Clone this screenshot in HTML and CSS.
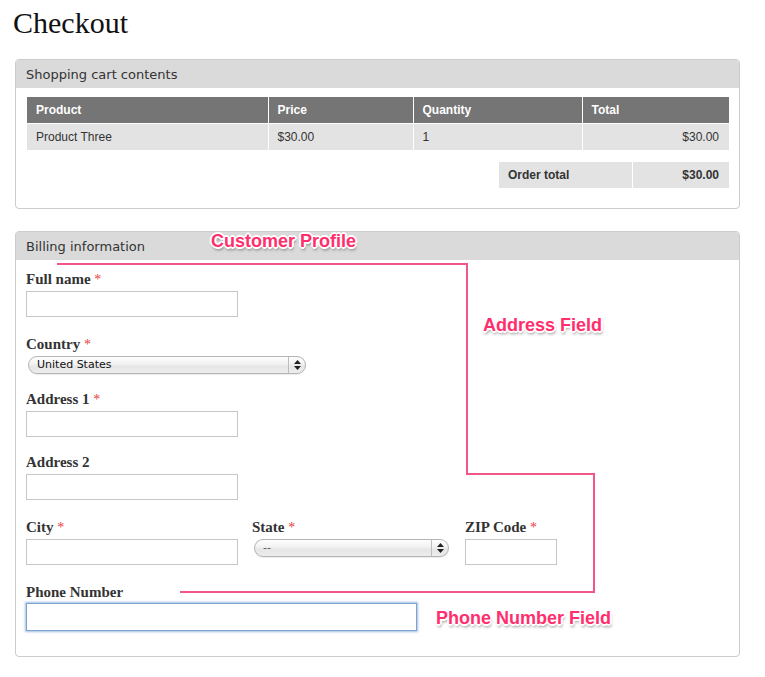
FILE: index.html
```html
<!DOCTYPE html>
<html lang="en">
<head>
<meta charset="utf-8">
<title>Checkout</title>
<link rel="stylesheet" href="styles.css">
</head>
<body>
<div class="page">
  <h1 class="title">Checkout</h1>

  <section class="pane cart">
    <div class="pane-title">Shopping cart contents</div>
    <div class="pane-body cart-body">
      <table class="cart-table">
        <colgroup>
          <col class="c1"><col class="c2"><col class="c3"><col class="c4">
        </colgroup>
        <thead>
          <tr><th>Product</th><th>Price</th><th>Quantity</th><th>Total</th></tr>
        </thead>
        <tbody>
          <tr><td>Product Three</td><td>$30.00</td><td>1</td><td class="num">$30.00</td></tr>
        </tbody>
      </table>
      <table class="order-total">
        <tr><td class="ot-label">Order total</td><td class="ot-value">$30.00</td></tr>
      </table>
    </div>
  </section>

  <section class="pane billing">
    <div class="pane-title">Billing information</div>
    <div class="pane-body form-body">
      <div class="field f-name">
        <label class="lbl">Full name <span class="req">*</span></label>
        <input class="txt w-std" type="text">
      </div>
      <div class="field f-country">
        <label class="lbl">Country <span class="req">*</span></label>
        <div class="select select-country">
          <span class="select-value">United States</span>
          <span class="select-arrows"><svg width="7" height="10" viewBox="0 0 7 10"><polygon points="0,4 3.5,0 7,4" fill="#222"/><polygon points="0,6 3.5,10 7,6" fill="#222"/></svg></span>
        </div>
      </div>
      <div class="field f-addr1">
        <label class="lbl">Address 1 <span class="req">*</span></label>
        <input class="txt w-std" type="text">
      </div>
      <div class="field f-addr2">
        <label class="lbl">Address 2</label>
        <input class="txt w-std" type="text">
      </div>
      <div class="field row3">
        <div class="col">
          <label class="lbl">City <span class="req">*</span></label>
          <input class="txt w-std" type="text">
        </div>
        <div class="col">
          <label class="lbl">State <span class="req">*</span></label>
          <div class="select select-state">
            <span class="select-value">--</span>
            <span class="select-arrows"><svg width="7" height="10" viewBox="0 0 7 10"><polygon points="0,4 3.5,0 7,4" fill="#222"/><polygon points="0,6 3.5,10 7,6" fill="#222"/></svg></span>
          </div>
        </div>
        <div class="col">
          <label class="lbl">ZIP Code <span class="req">*</span></label>
          <input class="txt w-zip" type="text">
        </div>
      </div>
      <div class="field last">
        <label class="lbl lbl-phone">Phone Number</label>
        <input class="txt w-phone focus" type="text">
      </div>
    </div>
  </section>

  <svg class="annot-lines" width="765" height="677" viewBox="0 0 765 677">
    <polyline points="57,264 467,264 467,474 594,474 594,592 180,592" fill="none" stroke="#f25686" stroke-width="2"/>
  </svg>
  <span class="annot annot-profile">Customer Profile</span>
  <span class="annot annot-address">Address Field</span>
  <span class="annot annot-phone">Phone Number Field</span>
</div>
</body>
</html>
```

FILE: styles.css
```css
html, body {
  margin: 0;
  padding: 0;
  background: #fff;
}

.page {
  position: relative;
  width: 765px;
  min-height: 677px;
  padding: 5px 25px 0 15px;
  box-sizing: border-box;
  font-family: "Liberation Sans", Arial, sans-serif;
  color: #333;
}

.title {
  margin: 0 0 18px -2px;
  font-family: "Liberation Serif", "Times New Roman", serif;
  font-weight: normal;
  font-size: 30px;
  line-height: 36px;
  color: #111;
}

.pane {
  border: 1px solid #cccccc;
  border-radius: 4px;
  overflow: hidden;
}

.billing {
  margin-top: 22px;
}

.pane-title {
  height: 28px;
  line-height: 29px;
  background: #dadada;
  padding-left: 10px;
  font-family: "DejaVu Sans", "Lucida Grande", sans-serif;
  font-size: 13px;
  color: #333;
}

.cart-body {
  padding: 9px 10px 20px 11px;
  display: flex;
  flex-direction: column;
  align-items: flex-end;
}

.cart-table {
  width: 702px;
  border-collapse: collapse;
  table-layout: fixed;
  font-size: 12px;
}

.cart-table .c1 { width: 241px; }
.cart-table .c2 { width: 145px; }
.cart-table .c3 { width: 169px; }
.cart-table .c4 { width: 147px; }

.cart-table th {
  background: #757575;
  color: #fff;
  font-weight: bold;
  text-align: left;
  height: 26px;
  padding: 0 9px;
  border-left: 1px solid #fff;
}

.cart-table td {
  background: #e3e3e3;
  height: 26px;
  padding: 0 9px;
  border-left: 1px solid #fff;
  border-top: 1px solid #fff;
  color: #333;
}

.cart-table th:first-child,
.cart-table td:first-child {
  border-left: none;
}

.cart-table td.num {
  text-align: right;
  padding-right: 10px;
}

.order-total {
  margin-top: 12px;
  border-collapse: collapse;
  font-size: 12px;
  font-weight: bold;
}

.order-total td {
  background: #e3e3e3;
  height: 26px;
  color: #333;
}

.ot-label {
  width: 124px;
  padding: 0 0 0 9px;
  border-right: 1px solid #fff;
}

.ot-value {
  width: 86px;
  padding: 0 10px 0 0;
  text-align: right;
}

.form-body {
  padding: 11px 10px 25px 10px;
}

.field { margin-bottom: 19px; }
.field.f-name { margin-bottom: 19px; }
.field.f-country { margin-bottom: 17px; }
.field.f-addr1 { margin-bottom: 17px; }
.field.f-addr2 { margin-bottom: 19px; }
.field.row3 { margin-bottom: 19px; }
.field.last { margin-bottom: 0; }

.lbl {
  display: block;
  height: 16px;
  margin-bottom: 4px;
  font-family: "Liberation Serif", Georgia, serif;
  font-weight: bold;
  font-size: 15px;
  line-height: 16px;
  color: #333;
}

.lbl-phone {
  margin-bottom: 3px;
}

.req {
  color: #e8413f;
  font-weight: normal;
  font-size: 14px;
  line-height: 0;
}

.txt {
  display: block;
  box-sizing: border-box;
  height: 26px;
  margin: 0;
  border: 1px solid #c6c6c6;
  background: #fff;
  padding: 2px 4px;
  font-size: 12px;
  outline: none;
}

.w-std { width: 212px; }
.w-zip { width: 92px; }
.w-phone {
  width: 391px;
  height: 28px;
}

.txt.focus {
  border: 1px solid #7fa3cf;
  box-shadow: 0 0 2px 1px rgba(110, 155, 210, 0.65);
}

.select {
  display: flex;
  align-items: stretch;
  box-sizing: border-box;
  height: 18px;
  margin-left: 2px;
  border: 1px solid #b5b5b5;
  border-radius: 9px;
  background: linear-gradient(to bottom, #fdfdfd 0%, #f3f3f3 40%, #e6e6e6 60%, #ededed 100%);
  box-shadow: 0 1px 1px rgba(0, 0, 0, 0.08);
  font-family: "DejaVu Sans", "Lucida Grande", sans-serif;
  font-size: 11px;
  color: #111;
}

.select-country { width: 278px; }
.select-state { width: 195px; }

.select-value {
  flex: 1;
  line-height: 16px;
  padding-left: 8px;
}

.select-state .select-value {
  color: #555;
}

.select-arrows {
  width: 16px;
  border-left: 1px solid #bdbdbd;
  display: flex;
  align-items: center;
  justify-content: center;
}

.row3 {
  display: grid;
  grid-template-columns: 226px 213px auto;
}

.annot-lines {
  position: absolute;
  left: 0;
  top: 0;
  pointer-events: none;
}

.annot {
  position: absolute;
  font-family: "Liberation Sans", Arial, sans-serif;
  font-weight: bold;
  font-size: 18px;
  line-height: 18px;
  color: #ff2f6e;
  white-space: nowrap;
  text-shadow:
    1px 0 0 #fff, -1px 0 0 #fff, 0 1px 0 #fff, 0 -1px 0 #fff,
    1px 1px 0 #fff, -1px -1px 0 #fff, 1px -1px 0 #fff, -1px 1px 0 #fff,
    2px 0 0 #fff, -2px 0 0 #fff, 0 2px 0 #fff, 0 -2px 0 #fff,
    1px 3px 3px rgba(0, 0, 0, 0.45);
}

.annot-profile { left: 211px; top: 232px; }
.annot-address { left: 483px; top: 316px; }
.annot-phone { left: 436px; top: 609px; }
```
